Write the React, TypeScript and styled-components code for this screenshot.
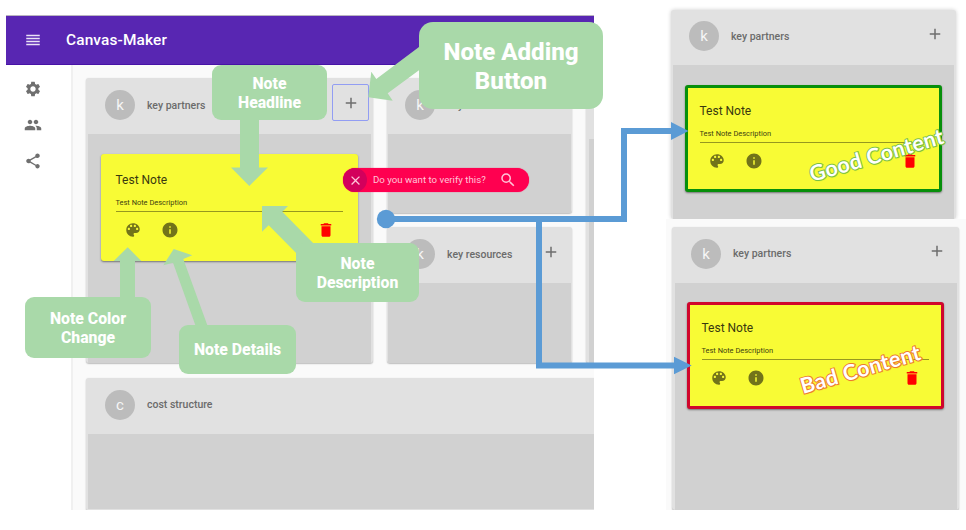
import React from "react";
import styled, { createGlobalStyle, css } from "styled-components";
import {
  MdAdd,
  MdClose,
  MdDelete,
  MdInfo,
  MdPeople,
  MdReorder,
  MdSearch,
  MdSettings,
  MdShare,
} from "react-icons/md";

const GlobalStyle = createGlobalStyle`
  * { box-sizing: border-box; }
  body {
    margin: 0;
    background: #fff;
    font-family: Roboto, "Liberation Sans", sans-serif;
  }
`;

const Page = styled.main`
  position: relative;
  display: flex;
  align-items: flex-start;
  width: 966px;
  height: 530px;
  overflow: hidden;
  background: #fff;
`;

const AppWindow = styled.section`
  flex: none;
  display: flex;
  flex-direction: column;
  width: 588px;
  height: 495px;
  margin: 15px 0 0 6px;
  overflow: hidden;
`;

const AppBar = styled.header`
  flex: none;
  display: flex;
  align-items: center;
  gap: 24px;
  height: 50px;
  padding-left: 18px;
  border-top: 1px solid #b9b5c0;
  border-bottom: 1px solid #4712a6;
  background: #5826b2;
  color: #e9e2f6;
`;

const AppTitle = styled.h1`
  margin: 0;
  font-size: 15.4px;
  font-weight: 500;
  letter-spacing: 0.15px;
  color: #fff;
`;

const Workspace = styled.div`
  flex: 1;
  display: flex;
  min-height: 0;
`;

const SideNav = styled.nav`
  flex: none;
  display: flex;
  flex-direction: column;
  align-items: center;
  gap: 18.2px;
  width: 67px;
  padding: 14.5px 11.5px 0 0;
  border-right: 2px solid #f0f0f0;
  background: #fff;
  color: #6f6f6f;
`;

const CanvasGrid = styled.div`
  flex: none;
  display: grid;
  grid-template-columns: 287.5px 185px 60px;
  grid-template-rows: 135px 136px 133px;
  gap: 14.4px 14.1px;
  width: 521px;
  padding: 13px 0 0 12.5px;
  overflow: hidden;
  background: #fafafa;
`;

type Span = "tall" | "wide" | "single";

const CardBox = styled.article<{ $span?: Span; $inset?: number; $closed?: boolean }>`
  display: flex;
  flex-direction: column;
  min-width: 0;
  min-height: 0;
  padding: 0 ${(p) => p.$inset ?? 2.5}px ${(p) => (p.$closed ? "2px" : "0")};
  border-radius: 3px;
  background: #e1e1e1;
  box-shadow: 0 1px 1.5px rgba(0, 0, 0, 0.24), 0 0 2px rgba(0, 0, 0, 0.06);
  ${(p) => p.$span === "tall" && css`grid-row: span 2;`}
  ${(p) => p.$span === "wide" && css`grid-column: 1 / -1;`}
`;

const CardHeader = styled.header<{ $height: number }>`
  flex: none;
  display: flex;
  align-items: center;
  height: ${(p) => p.$height}px;
  padding: 0 1.5px 2px 17px;
`;

const Avatar = styled.span`
  flex: none;
  display: grid;
  place-items: center;
  width: 30px;
  height: 30px;
  border-radius: 50%;
  background: #bcbcbc;
  color: #f6f6f6;
  font-size: 15px;
`;

const CardTitle = styled.h2`
  flex: 1;
  margin: 0 0 0 12px;
  white-space: nowrap;
  color: #6b6b6b;
  font-size: 10.5px;
  font-weight: 500;
`;

const AddButton = styled.button<{ $focused?: boolean }>`
  flex: none;
  display: grid;
  place-items: center;
  width: 37px;
  height: 37px;
  margin-bottom: 5px;
  padding: 0;
  border: 1.5px solid ${(p) => (p.$focused ? "#929df3" : "transparent")};
  border-radius: 2px;
  background: none;
  color: #6e6e6e;
`;

const CardBody = styled.div`
  flex: 1;
  padding: 19.5px 0 0 12.5px;
  background: #d1d1d1;
`;

const NoteBox = styled.div<{ $border?: string }>`
  display: flex;
  flex-direction: column;
  width: 257.5px;
  height: 107px;
  padding: 16px 12px 0;
  border: 3px solid ${(p) => p.$border ?? "#f8fb35"};
  border-radius: 3px;
  background: #f8fb35;
  box-shadow: 0 1px 2px rgba(0, 0, 0, 0.45);
`;

const NoteTitle = styled.h3`
  margin: 0;
  height: 14px;
  color: #38380f;
  font-size: 12px;
  line-height: 14px;
  font-weight: 400;
`;

const NoteText = styled.p`
  margin: 11px 0 0;
  height: 14px;
  border-bottom: 1px solid #96981f;
  color: #3e3f10;
  font-size: 7.45px;
  line-height: 9px;
`;

const NoteActions = styled.div`
  display: flex;
  gap: 18.5px;
  margin-top: 9px;
  padding: 0 8px 0 8.5px;
  color: #72731a;

  svg:last-child {
    margin-left: auto;
    color: #ff0000;
  }
`;

const Examples = styled.aside`
  flex: none;
  display: flex;
  flex-direction: column;
  width: 300px;
  height: 510px;
  margin-left: 72px;
`;

const GoodExample = styled.section`
  display: flex;
  height: 219px;
  padding: 9.5px 10px 0 5px;
  overflow: hidden;

  & > article {
    flex: 1;
    box-shadow: 0 0 4px rgba(0, 0, 0, 0.2);
  }
  ${CardHeader} {
    padding: 0 0.5px 2px 16px;
  }
  ${CardBody} {
    padding-left: 11.5px;
  }
`;

const BadExample = styled.section`
  display: flex;
  height: 291px;
  padding: 8px 7px 0 6px;
  overflow: hidden;
  background: #fafafa;

  & > article {
    flex: 1;
  }
  ${CardHeader} {
    padding-left: 16.5px;
  }
  ${CardBody} {
    padding-left: 12px;
  }
`;

const Pill = styled.div`
  position: absolute;
  left: 343px;
  top: 168px;
  display: flex;
  align-items: center;
  width: 186px;
  height: 24px;
  padding-right: 12.5px;
  border-radius: 13px;
  background: #ff0050;
  color: #ffc4d8;
  font-size: 9.7px;
  box-shadow: 0 0 1px #ff0050;
`;

const PillClose = styled.span`
  display: grid;
  place-items: center;
  width: 24px;
  height: 24px;
  margin-right: 6px;
  border-radius: 50%;
  background: #d3005c;
`;

const PillText = styled.span`
  flex: 1;
  margin-top: -1px;
  white-space: nowrap;
`;

const Overlay = styled.svg`
  position: absolute;
  inset: 0;
  pointer-events: none;
`;

const Callout = styled.div<{ $x: number; $y: number; $w: number; $h: number; $large?: boolean }>`
  position: absolute;
  left: ${(p) => p.$x}px;
  top: ${(p) => p.$y}px;
  display: flex;
  align-items: center;
  justify-content: center;
  width: ${(p) => p.$w}px;
  height: ${(p) => p.$h}px;
  padding-top: ${(p) => (p.$large ? 2 : 0)}px;
  border-radius: ${(p) => (p.$large ? 14 : 9)}px;
  background: #a9d9a9;
  color: #fff;
  font-size: ${(p) => (p.$large ? 24.1 : 15.8)}px;
  line-height: ${(p) => (p.$large ? 29 : 19)}px;
  font-weight: 800;
  text-align: center;
  white-space: pre-line;
`;

const Stamp = styled.strong<{ $x: number; $y: number; $edge: string; $spacing: number }>`
  position: absolute;
  left: ${(p) => p.$x}px;
  top: ${(p) => p.$y}px;
  color: #fff;
  font-family: Lato, sans-serif;
  font-size: 21.5px;
  line-height: 26px;
  font-weight: 700;
  letter-spacing: ${(p) => p.$spacing}px;
  white-space: nowrap;
  transform: rotate(-16.3deg);
  transform-origin: 0 21px;
  -webkit-text-stroke: 2px ${(p) => p.$edge};
  paint-order: stroke fill;
  text-shadow: 0.5px 1px 1px ${(p) => p.$edge};
`;

const PaletteIcon = () => (
  <svg width="18" height="18" viewBox="0 0 24 24" fill="currentColor">
    <path d="M12 3c-4.97 0-9 4.03-9 9s4.03 9 9 9c.83 0 1.5-.67 1.5-1.5 0-.39-.15-.74-.39-1.01-.23-.26-.38-.61-.38-.99 0-.83.67-1.5 1.5-1.5H16c2.76 0 5-2.24 5-5 0-4.42-4.03-8-9-8zm-5.5 9c-.83 0-1.5-.67-1.5-1.5S5.67 9 6.5 9 8 9.67 8 10.5 7.33 12 6.5 12zm3-4C8.67 8 8 7.33 8 6.5S8.67 5 9.5 5s1.5.67 1.5 1.5S10.33 8 9.5 8zm5 0c-.83 0-1.5-.67-1.5-1.5S13.67 5 14.5 5s1.5.67 1.5 1.5S15.33 8 14.5 8zm3 4c-.83 0-1.5-.67-1.5-1.5S16.67 9 17.5 9s1.5.67 1.5 1.5-.67 1.5-1.5 1.5z" />
  </svg>
);

const Note = ({ border }: { border?: string }) => (
  <NoteBox $border={border}>
    <NoteTitle>Test Note</NoteTitle>
    <NoteText>Test Note Description</NoteText>
    <NoteActions>
      <PaletteIcon />
      <MdInfo size={18} />
      <MdDelete size={18} />
    </NoteActions>
  </NoteBox>
);

type CardProps = {
  title: string;
  span?: Span;
  inset?: number;
  headerHeight?: number;
  focused?: boolean;
  closed?: boolean;
  children?: React.ReactNode;
};

const Card = ({ title, span, inset, headerHeight = 56, focused, closed, children }: CardProps) => (
  <CardBox $span={span} $inset={inset} $closed={closed}>
    <CardHeader $height={headerHeight}>
      <Avatar>{title[0]}</Avatar>
      <CardTitle>{title}</CardTitle>
      <AddButton $focused={focused} aria-label="Add note">
        <MdAdd size={18} />
      </AddButton>
    </CardHeader>
    <CardBody>{children}</CardBody>
  </CardBox>
);

const ColumnEdge = () => (
  <CardBox $span="tall">
    <CardHeader $height={61} />
    <CardBody />
  </CardBox>
);

export default function App() {
  return (
    <>
      <GlobalStyle />
      <Page>
        <AppWindow>
          <AppBar>
            <MdReorder size={18} />
            <AppTitle>Canvas-Maker</AppTitle>
          </AppBar>
          <Workspace>
            <SideNav>
              <MdSettings size={18} />
              <MdPeople size={18} />
              <MdShare size={18} />
            </SideNav>
            <CanvasGrid>
              <Card title="key partners" span="tall" focused>
                <Note />
              </Card>
              <Card title="key activities" inset={1} />
              <ColumnEdge />
              <Card title="key resources" inset={1} />
              <Card title="cost structure" span="wide" closed />
            </CanvasGrid>
          </Workspace>
        </AppWindow>

        <Examples>
          <GoodExample>
            <Card title="key partners" inset={2} headerHeight={55.5}>
              <Note border="#078f0b" />
            </Card>
          </GoodExample>
          <BadExample>
            <Card title="key partners" headerHeight={55.5}>
              <Note border="#d0062c" />
            </Card>
          </BadExample>
        </Examples>

        <Pill>
          <PillClose>
            <MdClose size={15} />
          </PillClose>
          <PillText>Do you want to verify this?</PillText>
          <MdSearch size={18} />
        </Pill>

        <Stamp $x={812} $y={161} $edge="#7cc142" $spacing={0.3}>Good Content</Stamp>
        <Stamp $x={803} $y={373} $edge="#ee7a30" $spacing={0.4}>Bad Content</Stamp>

        <Overlay width="966" height="530" viewBox="0 0 966 530">
          <g fill="none" stroke="#5b9bd5" strokeWidth="6">
            <path d="M386 219H624V131H673" />
            <path d="M539 219V365.5H676" />
          </g>
          <g fill="#5b9bd5">
            <circle cx="386" cy="219" r="9.2" />
            <path d="M671 122L688.5 131L671 140Z" />
            <path d="M674 356.7L691.7 365.5L674 374.3Z" />
          </g>
          <g fill="#a9d9a9">
            <path d="M240 115H259V167.5H268L249.3 186L231 167.5H240Z" />
            <path d="M368.3 97.3L371.3 71.7L376.3 79L421 45.5V68.8L387.7 93.3L392.7 100.7Z" />
            <path d="M262 206H288L282.3 211.7L316 246V262H305L268.7 225.3L262 231.7Z" />
            <path d="M127.7 247.3L141.3 261H135V300H120V261H113.7Z" />
            <path d="M173.7 249L192.3 255.3L183.3 259L208 327H196L173 262.7L163.3 265.3Z" />
          </g>
        </Overlay>

        <Callout $x={212} $y={65} $w={115} $h={55}>{"Note\nHeadline"}</Callout>
        <Callout $x={419} $y={22} $w={184} $h={87} $large>{"Note Adding\nButton"}</Callout>
        <Callout $x={296} $y={243} $w={123} $h={59}>{"Note\nDescription"}</Callout>
        <Callout $x={25} $y={297} $w={126} $h={61}>{"Note Color\nChange"}</Callout>
        <Callout $x={179} $y={325} $w={117} $h={49}>Note Details</Callout>
      </Page>
    </>
  );
}
